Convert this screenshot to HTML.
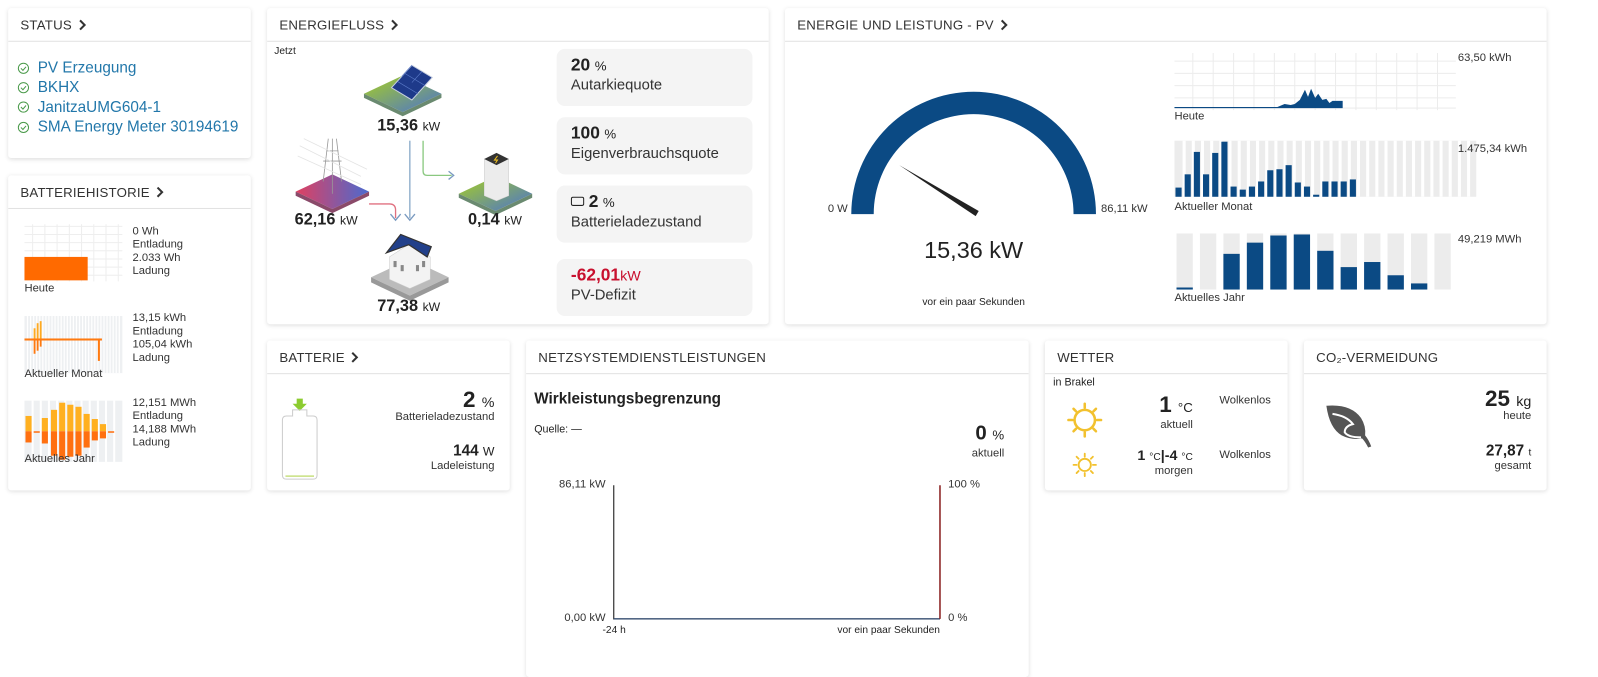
<!DOCTYPE html>
<html><head><meta charset="utf-8"><style>
*{box-sizing:border-box;margin:0;padding:0}
html,body{width:1598px;height:663px;overflow:hidden;background:#fff;font-family:"Liberation Sans",sans-serif;color:#222}
#w{position:absolute;left:0;top:0;width:1570px;height:660px;transform:scale(1.0195);transform-origin:0 0}
.c{position:absolute;background:#fff;box-shadow:0 1px 4px rgba(0,0,0,.13);border-radius:3px;overflow:hidden}
.h{height:33px;border-bottom:1px solid #e2e2e2;padding:9px 12px 0;font-size:13px;letter-spacing:.2px;color:#333}
.h svg{vertical-align:-1px;margin-left:6px}
.t{position:absolute;white-space:nowrap}
.s{font-size:11px;line-height:13px;color:#333}
.box{position:absolute;left:284px;width:192px;height:56px;background:#f4f4f4;border-radius:8px;padding:6px 14px}
.box b{font-size:17px}
.box div{font-size:14.5px;margin-top:2px;color:#333}
.st{display:flex;align-items:center;height:19.3px}
.st svg{margin-right:8px}
</style></head><body><div id="w">

<!-- STATUS -->
<div class="c" style="left:8px;top:8px;width:238px;height:147px">
<div class="h">STATUS<svg width="8" height="11" viewBox="0 0 8 11"><path d="M1.5 1l4.5 4.5-4.5 4.5" stroke="#333" stroke-width="2" fill="none"/></svg></div>
<div style="position:absolute;left:9px;top:49px;font-size:15px;color:#2277aa">
<div class="st"><svg width="12" height="12"><circle cx="6" cy="6" r="5" fill="none" stroke="#4a9a4a"/><path d="M3.5 6l2 2 3-3.5" fill="none" stroke="#4a9a4a"/></svg>PV Erzeugung</div>
<div class="st"><svg width="12" height="12"><circle cx="6" cy="6" r="5" fill="none" stroke="#4a9a4a"/><path d="M3.5 6l2 2 3-3.5" fill="none" stroke="#4a9a4a"/></svg>BKHX</div>
<div class="st"><svg width="12" height="12"><circle cx="6" cy="6" r="5" fill="none" stroke="#4a9a4a"/><path d="M3.5 6l2 2 3-3.5" fill="none" stroke="#4a9a4a"/></svg>JanitzaUMG604-1</div>
<div class="st"><svg width="12" height="12"><circle cx="6" cy="6" r="5" fill="none" stroke="#4a9a4a"/><path d="M3.5 6l2 2 3-3.5" fill="none" stroke="#4a9a4a"/></svg>SMA Energy Meter 30194619</div>
</div></div>

<!-- BATTERIEHISTORIE -->
<div class="c" style="left:8px;top:172px;width:238px;height:309px">
<div class="h">BATTERIEHISTORIE<svg width="8" height="11" viewBox="0 0 8 11"><path d="M1.5 1l4.5 4.5-4.5 4.5" stroke="#333" stroke-width="2" fill="none"/></svg></div>
<svg style="position:absolute;left:0;top:0" width="238" height="309">
<g stroke="#eee" stroke-width="1">
<path d="M16 50H112M16 58H112M16 66H112M16 74H112M16 82H112M16 90H112M16 98H112"/>
<path d="M24 48V104M36 48V104M48 48V104M60 48V104M72 48V104M84 48V104M96 48V104M108 48V104"/>
</g>
<rect x="16" y="80" width="62" height="23" fill="#ff6a00"/>
<g fill="#eef0f2">
<rect x="16" y="138" width="96" height="56"/>
</g>
<g stroke="#fff" stroke-width="1.2"><path d="M19 138v56M22 138v56M25 138v56M28 138v56M31 138v56M34 138v56M37 138v56M40 138v56M43 138v56M46 138v56M49 138v56M52 138v56M55 138v56M58 138v56M61 138v56M64 138v56M67 138v56M70 138v56M73 138v56M76 138v56M79 138v56M82 138v56M85 138v56M88 138v56M91 138v56M94 138v56M97 138v56M100 138v56M103 138v56M106 138v56M109 138v56"/></g>
<g fill="#ffaa20"><rect x="25" y="150" width="1.8" height="10"/><rect x="28" y="145" width="1.8" height="15"/><rect x="31" y="143" width="1.8" height="17"/></g>
<g fill="#ff7a10"><rect x="16" y="160" width="76" height="2"/><rect x="25" y="160" width="1.8" height="15"/><rect x="28" y="160" width="1.8" height="12"/><rect x="31" y="160" width="1.8" height="8"/><rect x="88" y="160" width="2" height="22"/></g>
<g fill="#eef0f2"><rect x="16" y="221" width="96" height="60"/></g>
<g stroke="#fff" stroke-width="2"><path d="M24 221v60M32 221v60M40 221v60M48 221v60M56 221v60M64 221v60M72 221v60M80 221v60M88 221v60M96 221v60M104 221v60"/></g>
<g fill="#ffb020"><rect x="17" y="236" width="6" height="15"/><rect x="33" y="238" width="6" height="13"/><rect x="42" y="230" width="6" height="21"/><rect x="50" y="223" width="6" height="28"/><rect x="58" y="225" width="6" height="26"/><rect x="66" y="227" width="6" height="24"/><rect x="74" y="234" width="6" height="17"/><rect x="82" y="239" width="6" height="12"/><rect x="90" y="244" width="6" height="7"/></g>
<g fill="#ff7010"><rect x="17" y="251" width="6" height="11"/><rect x="25" y="251" width="6" height="1.5"/><rect x="33" y="251" width="6" height="12"/><rect x="42" y="251" width="6" height="24"/><rect x="50" y="251" width="6" height="28"/><rect x="58" y="251" width="6" height="25"/><rect x="66" y="251" width="6" height="24"/><rect x="74" y="251" width="6" height="16"/><rect x="82" y="251" width="6" height="9"/><rect x="90" y="251" width="6" height="7"/><rect x="98" y="251" width="6" height="1.5"/></g>
</svg>
<div class="t s" style="left:122px;top:49px">0 Wh<br>Entladung<br>2.033 Wh<br>Ladung</div>
<div class="t s" style="left:16px;top:105px">Heute</div>
<div class="t s" style="left:122px;top:134px">13,15 kWh<br>Entladung<br>105,04 kWh<br>Ladung</div>
<div class="t s" style="left:16px;top:189px">Aktueller Monat</div>
<div class="t s" style="left:122px;top:217px">12,151 MWh<br>Entladung<br>14,188 MWh<br>Ladung</div>
<div class="t s" style="left:16px;top:272px">Aktuelles Jahr</div>
</div>

<!-- ENERGIEFLUSS -->
<div class="c" style="left:262px;top:8px;width:492px;height:310px">
<div class="h">ENERGIEFLUSS<svg width="8" height="11" viewBox="0 0 8 11"><path d="M1.5 1l4.5 4.5-4.5 4.5" stroke="#333" stroke-width="2" fill="none"/></svg></div>
<div class="t" style="left:7px;top:37px;font-size:10px">Jetzt</div>
<svg style="position:absolute;left:0;top:0" width="280" height="310">
<defs>
<linearGradient id="gb" x1="0" y1="0" x2="1" y2="1"><stop offset="0" stop-color="#a8d020"/><stop offset="1" stop-color="#4a72d0"/></linearGradient>
<linearGradient id="rb" x1="0" y1="0" x2="1" y2="0"><stop offset="0" stop-color="#e04060"/><stop offset="1" stop-color="#4a6ad0"/></linearGradient>
</defs>
<path d="M95 84l38-18 38 18-38 18z" fill="url(#gb)"/><path d="M95 84v4l38 18v-4zM171 84v4l-38 18v-4z" fill="#6a8a70"/>
<path d="M122 78l20-22 20 12-20 22z" fill="#1e3a8a" stroke="#c8d0e0" stroke-width="1"/>
<path d="M128 72l20 12M135 64l20 12M132 67l10-11M142 73l10-11" stroke="#5a7ac8" stroke-width=".6"/>
<path d="M28 180l36-17 36 17-36 17z" fill="url(#rb)"/><path d="M28 180v4l36 17v-4zM100 180v4l-36 17v-4z" fill="#8a4a6a"/>
<g stroke="#999" stroke-width=".8" fill="none"><path d="M64 128V182M58 140h12M55 150h18M60 128l-5 42M68 128l5 42"/><path d="M32 135l60 30M36 128l62 30M30 145l62 28" stroke="#e4e4e4"/></g>
<path d="M188 182l36-17 36 17-36 17z" fill="url(#gb)"/><path d="M188 182v4l36 17v-4zM260 182v4l-36 17v-4z" fill="#6a8a70"/>
<path d="M213 148h24v36l-12 5-12-5z" fill="#ececec" stroke="#ccc" stroke-width=".5"/><path d="M213 148l12-6 12 6-12 6z" fill="#333"/><path d="M226 145l-3 4h3l-2 3" stroke="#f0c020" stroke-width="1" fill="none"/>
<path d="M102 264l38-18 38 18-38 18z" fill="#bbb"/><path d="M102 264v5l38 18v-5zM178 264v5l-38 18v-5z" fill="#999"/>
<path d="M120 244v22l20 9 20-9v-22l-20-13z" fill="#f3f3f3" stroke="#ccc" stroke-width=".5"/><path d="M117 240l14-18 30 12-4 10-18-12z" fill="#22408a" stroke="#333" stroke-width="1.2"/>
<g fill="#888"><rect x="124" y="248" width="3" height="6"/><rect x="131" y="252" width="3" height="6"/><rect x="146" y="252" width="3" height="6"/><rect x="152" y="248" width="3" height="6"/></g>
<g fill="none" stroke-width="1.3">
<path d="M140 130v76" stroke="#8aaac8"/><path d="M135 202l5 6 5-6" stroke="#7a9ac0"/>
<path d="M153 130v30q0 4 4 4h24" stroke="#8ac880"/><path d="M178 160l5 4-5 4" stroke="#7a9ac0"/>
<path d="M100 192h20q6 0 6 6v8" stroke="#e07080"/><path d="M121 202l5 6 5-6" stroke="#7a9ac0"/>
</g>
</svg>
<div class="t" style="left:108px;top:107px;font-size:16px;font-weight:bold">15,36 <span style="font-size:12px;font-weight:normal">kW</span></div>
<div class="t" style="left:27px;top:199px;font-size:16px;font-weight:bold">62,16 <span style="font-size:12px;font-weight:normal">kW</span></div>
<div class="t" style="left:197px;top:199px;font-size:16px;font-weight:bold">0,14 <span style="font-size:12px;font-weight:normal">kW</span></div>
<div class="t" style="left:108px;top:284px;font-size:16px;font-weight:bold">77,38 <span style="font-size:12px;font-weight:normal">kW</span></div>
<div class="box" style="top:40px"><b>20</b> <span style="font-size:13px">%</span><div>Autarkiequote</div></div>
<div class="box" style="top:107px"><b>100</b> <span style="font-size:13px">%</span><div>Eigenverbrauchsquote</div></div>
<div class="box" style="top:174px"><span style="display:inline-block;width:13px;height:9px;border:1.5px solid #222;border-radius:2px;vertical-align:1px"></span> <b>2</b> <span style="font-size:13px">%</span><div>Batterieladezustand</div></div>
<div class="box" style="top:246px"><b style="color:#c8102e">-62,01</b><span style="font-size:14px;color:#c8102e">kW</span><div>PV-Defizit</div></div>
</div>

<!-- ENERGIE UND LEISTUNG -->
<div class="c" style="left:770px;top:8px;width:747px;height:310px">
<div class="h">ENERGIE UND LEISTUNG - PV<svg width="8" height="11" viewBox="0 0 8 11"><path d="M1.5 1l4.5 4.5-4.5 4.5" stroke="#333" stroke-width="2" fill="none"/></svg></div>
<svg style="position:absolute;left:0;top:0" width="747" height="310">
<path d="M65 202A120 120 0 0 1 305 202H283A98 98 0 0 0 87 202z" fill="#0b4a84"/>
<path d="M112 154L190 199 187 204z" fill="#222"/>
<g stroke="#ececec"><path d="M382 52H658M382 64H658M382 76H658M382 88H658M382 98H658"/><path d="M400 44V100M420 44V100M440 44V100M460 44V100M480 44V100M500 44V100M520 44V100M540 44V100M560 44V100M580 44V100M600 44V100M620 44V100M640 44V100"/></g>
<path d="M382 97H483L490 94 496 95 500 94 505 90 510 80 513 87 516 79 520 88 523 84 527 90 531 89 534 93 537 91 547 91V98H382z" fill="#0b4a84"/>
<g fill="#ececec"><rect x="382" y="130" width="296" height="55"/></g>
<g stroke="#fff" stroke-width="3"><path d="M391.5 130v55M400.5 130v55M409.5 130v55M418.5 130v55M427.5 130v55M436.5 130v55M445.5 130v55M454.5 130v55M463.5 130v55M472.5 130v55M481.5 130v55M490.5 130v55M499.5 130v55M508.5 130v55M517.5 130v55M526.5 130v55M535.5 130v55M544.5 130v55M553.5 130v55M562.5 130v55M571.5 130v55M580.5 130v55M589.5 130v55M598.5 130v55M607.5 130v55M616.5 130v55M625.5 130v55M634.5 130v55M643.5 130v55M652.5 130v55M661.5 130v55M670.5 130v55"/></g>
<g fill="#0b4a84"><rect x="383" y="176" width="6" height="9"/><rect x="392" y="163" width="6" height="22"/><rect x="401" y="141" width="6" height="44"/><rect x="410" y="163" width="6" height="22"/><rect x="419" y="142" width="6" height="43"/><rect x="428" y="131" width="6" height="54"/><rect x="437" y="175" width="6" height="10"/><rect x="446" y="178" width="6" height="7"/><rect x="455" y="175" width="6" height="10"/><rect x="464" y="170" width="6" height="15"/><rect x="473" y="159" width="6" height="26"/><rect x="482" y="158" width="6" height="27"/><rect x="491" y="154" width="6" height="31"/><rect x="500" y="171" width="6" height="14"/><rect x="509" y="175" width="6" height="10"/><rect x="518" y="183" width="6" height="2"/><rect x="527" y="170" width="6" height="15"/><rect x="536" y="170" width="6" height="15"/><rect x="545" y="170" width="6" height="15"/><rect x="554" y="168" width="6" height="17"/></g>
<g fill="#ececec"><rect x="384" y="221" width="16" height="55"/><rect x="407" y="221" width="16" height="55"/><rect x="430" y="221" width="16" height="55"/><rect x="453" y="221" width="16" height="55"/><rect x="476" y="221" width="16" height="55"/><rect x="499" y="221" width="16" height="55"/><rect x="522" y="221" width="16" height="55"/><rect x="545" y="221" width="16" height="55"/><rect x="568" y="221" width="16" height="55"/><rect x="591" y="221" width="16" height="55"/><rect x="614" y="221" width="16" height="55"/><rect x="637" y="221" width="16" height="55"/></g>
<g fill="#0b4a84"><rect x="384" y="274" width="16" height="2"/><rect x="430" y="241" width="16" height="35"/><rect x="453" y="230" width="16" height="46"/><rect x="476" y="223" width="16" height="53"/><rect x="499" y="222" width="16" height="54"/><rect x="522" y="238" width="16" height="38"/><rect x="545" y="254" width="16" height="22"/><rect x="568" y="249" width="16" height="27"/><rect x="591" y="262" width="16" height="14"/><rect x="614" y="270" width="16" height="6"/></g>
</svg>
<div class="t s" style="left:42px;top:191px">0 W</div>
<div class="t s" style="left:310px;top:191px">86,11 kW</div>
<div class="t" style="left:0;width:370px;text-align:center;top:224px;font-size:23px">15,36 kW</div>
<div class="t" style="left:0;width:370px;text-align:center;top:283px;font-size:10px">vor ein paar Sekunden</div>
<div class="t s" style="left:382px;top:100px">Heute</div>
<div class="t s" style="left:382px;top:189px">Aktueller Monat</div>
<div class="t s" style="left:382px;top:278px">Aktuelles Jahr</div>
<div class="t s" style="left:660px;top:43px">63,50 kWh</div>
<div class="t s" style="left:660px;top:132px">1.475,34 kWh</div>
<div class="t s" style="left:660px;top:221px">49,219 MWh</div>
</div>

<!-- BATTERIE -->
<div class="c" style="left:262px;top:334px;width:238px;height:147px">
<div class="h">BATTERIE<svg width="8" height="11" viewBox="0 0 8 11"><path d="M1.5 1l4.5 4.5-4.5 4.5" stroke="#333" stroke-width="2" fill="none"/></svg></div>
<svg style="position:absolute;left:0;top:0" width="120" height="147">
<path d="M29 57h6v5h4l-7 7-7-7h4z" fill="#8ccc30"/>
<path d="M25 74v-6h14v6h6q4 0 4 4v54q0 4-4 4h-26q-4 0-4-4v-54q0-4 4-4z" fill="none" stroke="#ccc" stroke-width="1"/>
<path d="M18 133h28" stroke="#c8e080" stroke-width="1.5"/>
</svg>
<div class="t" style="right:15px;top:45px;font-size:22px;font-weight:bold">2 <span style="font-size:14px;font-weight:normal">%</span></div>
<div class="t s" style="right:15px;top:69px">Batterieladezustand</div>
<div class="t" style="right:15px;top:100px;font-size:15px;font-weight:bold">144 <span style="font-size:12px;font-weight:normal">W</span></div>
<div class="t s" style="right:15px;top:117px">Ladeleistung</div>
</div>

<!-- NETZ -->
<div class="c" style="left:516px;top:334px;width:493px;height:330px">
<div class="h">NETZSYSTEMDIENSTLEISTUNGEN</div>
<div class="t" style="left:8px;top:49px;font-size:15px;font-weight:bold">Wirkleistungsbegrenzung</div>
<div class="t" style="left:8px;top:81px;font-size:10.5px">Quelle: —</div>
<div class="t" style="right:24px;top:80px;font-size:20px;font-weight:bold">0 <span style="font-size:13px;font-weight:normal">%</span></div>
<div class="t s" style="right:24px;top:105px">aktuell</div>
<svg style="position:absolute;left:0;top:0" width="493" height="330">
<path d="M86 142V273H406" stroke="#333" fill="none" stroke-width="1.2"/>
<path d="M86 273H406" stroke="#2a4a7a" stroke-width="1"/>
<path d="M406 142V273" stroke="#8a2020" stroke-width="1.5"/>
</svg>
<div class="t s" style="right:415px;top:135px">86,11 kW</div>
<div class="t s" style="right:415px;top:266px">0,00 kW</div>
<div class="t s" style="left:414px;top:135px">100 %</div>
<div class="t s" style="left:414px;top:266px">0 %</div>
<div class="t" style="left:75px;top:279px;font-size:10px">-24 h</div>
<div class="t" style="right:87px;top:279px;font-size:10px">vor ein paar Sekunden</div>
</div>

<!-- WETTER -->
<div class="c" style="left:1025px;top:334px;width:238px;height:147px">
<div class="h">WETTER</div>
<div class="t" style="left:8px;top:35px;font-size:10.5px">in Brakel</div>
<svg style="position:absolute;left:0;top:0" width="80" height="147">
<g stroke="#f2c12e" fill="none" stroke-linecap="round">
<circle cx="39" cy="78" r="10" stroke-width="2.5"/>
<path d="M39 62v4M39 90v4M23 78h4M51 78h4M28 67l2.5 2.5M47.5 86.5l2.5 2.5M50 67l-2.5 2.5M30.5 86.5L28 89" stroke-width="2.5"/>
<circle cx="39" cy="122" r="6" stroke-width="1.8"/>
<path d="M39 111v3M39 130v3M28 122h3M47 122h3M31 114l2 2M45 128l2 2M47 114l-2 2M33 128l-2 2" stroke-width="1.8"/>
</g></svg>
<div class="t" style="right:93px;top:50px;font-size:22px;font-weight:bold">1 <span style="font-size:13px;font-weight:normal">°C</span></div>
<div class="t s" style="right:93px;top:77px">aktuell</div>
<div class="t" style="right:93px;top:104px;font-size:14px;font-weight:bold">1 <span style="font-size:10px;font-weight:normal">°C</span>|-4 <span style="font-size:10px;font-weight:normal">°C</span></div>
<div class="t s" style="right:93px;top:122px">morgen</div>
<div class="t s" style="left:171px;top:53px">Wolkenlos</div>
<div class="t s" style="left:171px;top:106px">Wolkenlos</div>
</div>

<!-- CO2 -->
<div class="c" style="left:1279px;top:334px;width:238px;height:147px">
<div class="h">CO₂-VERMEIDUNG</div>
<svg style="position:absolute;left:0;top:0" width="80" height="147">
<path d="M22 64q24-2 34 12q5 8 4 17q4 5 6 11l-3 1q-3-6-6-9q-10 2-20-3q-12-7-15-29z" fill="#555"/>
<path d="M28 72q14 2 20 10q-8 2-8 8q3 5 16 5" stroke="#fff" stroke-width="2" fill="none"/>
</svg>
<div class="t" style="right:15px;top:44px;font-size:22px;font-weight:bold">25 <span style="font-size:14px;font-weight:normal">kg</span></div>
<div class="t s" style="right:15px;top:68px">heute</div>
<div class="t" style="right:15px;top:100px;font-size:15px;font-weight:bold">27,87 <span style="font-size:10px;font-weight:normal">t</span></div>
<div class="t s" style="right:15px;top:117px">gesamt</div>
</div>

</div></body></html>
